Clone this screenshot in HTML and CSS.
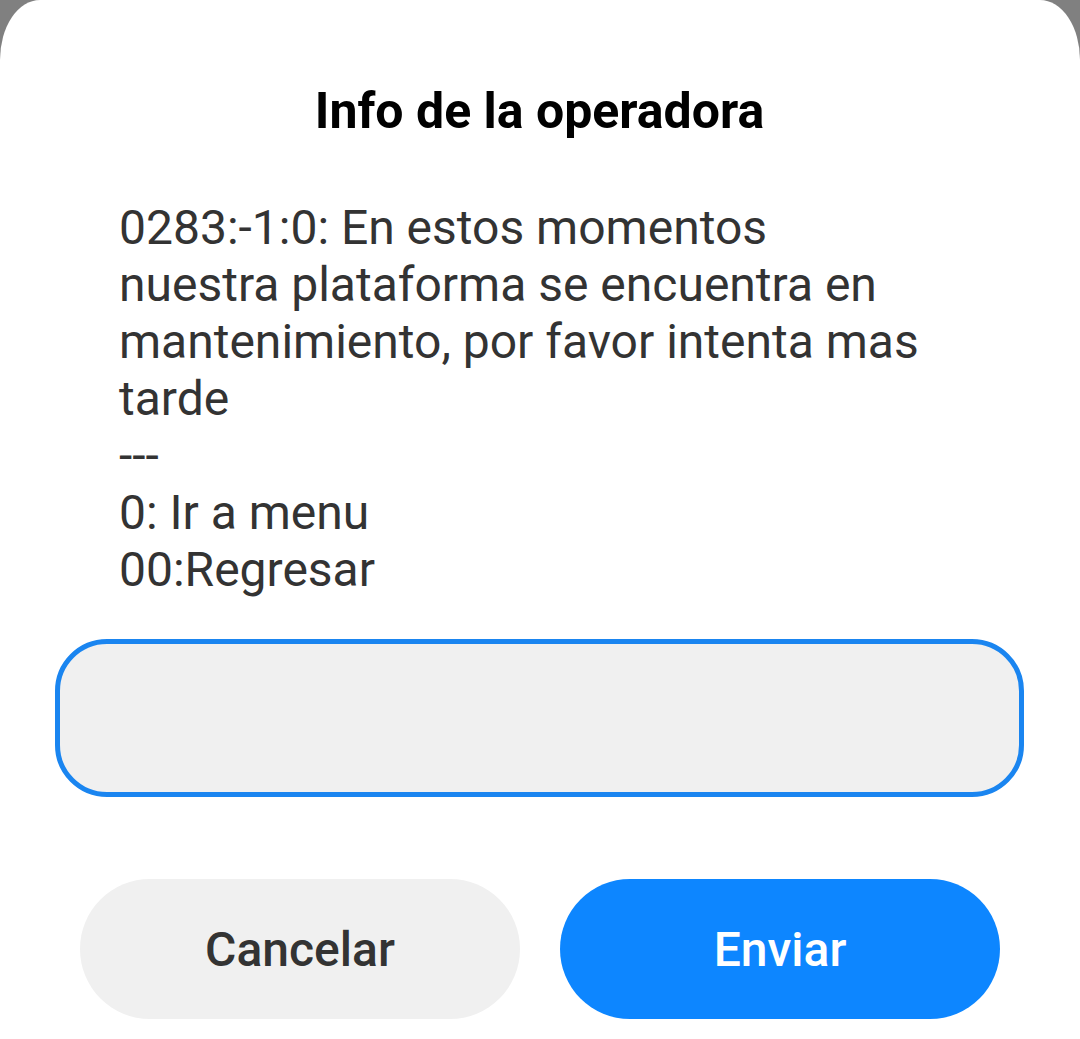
FILE: index.html
```html
<!DOCTYPE html>
<html lang="es">
<head>
<meta charset="utf-8">
<title>Info de la operadora</title>
<link rel="stylesheet" href="styles.css">
</head>
<body>
<div class="dialog">
  <h1 class="title">Info de la operadora</h1>
  <div class="message">
    <p class="para">0283:-1:0: En estos momentos nuestra plataforma se encuentra en mantenimiento, por favor intenta mas tarde</p>
    <p class="para">---</p>
    <p class="para">0: Ir a menu</p>
    <p class="para">00:Regresar</p>
  </div>
  <div class="input-wrap">
    <input class="reply" type="text" aria-label="Respuesta">
  </div>
  <div class="actions">
    <button class="btn btn-cancel" type="button">Cancelar</button>
    <button class="btn btn-send" type="button">Enviar</button>
  </div>
</div>
</body>
</html>
```

FILE: styles.css
```css
* { box-sizing: border-box; }
html, body {
  margin: 0;
  padding: 0;
  height: 100%;
}
body {
  background: #808080;
  font-family: Roboto, "Noto Sans", "Liberation Sans", sans-serif;
  overflow: hidden;
}
.dialog {
  background: #ffffff;
  min-height: 100%;
  border-radius: 40px 40px 0 0 / 60px 60px 0 0;
  padding: 81px 56px 0 55px;
  display: flex;
  flex-direction: column;
}
.title {
  margin: 0;
  font-size: 50px;
  line-height: 60px;
  font-weight: 700;
  color: #000000;
  text-align: center;
}
.message {
  margin-top: 58px;
  padding-left: 64px;
  width: 879px;
  color: #333333;
  font-size: 48px;
  line-height: 57px;
}
.para {
  margin: 0;
}
.input-wrap {
  margin-top: 41px;
}
.reply {
  display: block;
  width: 100%;
  height: 158px;
  border: 5px solid #1a85f0;
  border-radius: 52px;
  background: #f0f0f0;
  outline: none;
  font: inherit;
}
.actions {
  margin-top: 82px;
  padding: 0 24px 0 25px;
  display: flex;
  gap: 40px;
}
.btn {
  flex: 1;
  height: 140px;
  border: none;
  border-radius: 70px;
  font-family: Roboto, "Noto Sans", "Liberation Sans", sans-serif;
  font-size: 48px;
  font-weight: 500;
}
.btn-cancel {
  background: #f0f0f0;
  color: #333333;
}
.btn-send {
  background: #0d86ff;
  color: #ffffff;
}
```
